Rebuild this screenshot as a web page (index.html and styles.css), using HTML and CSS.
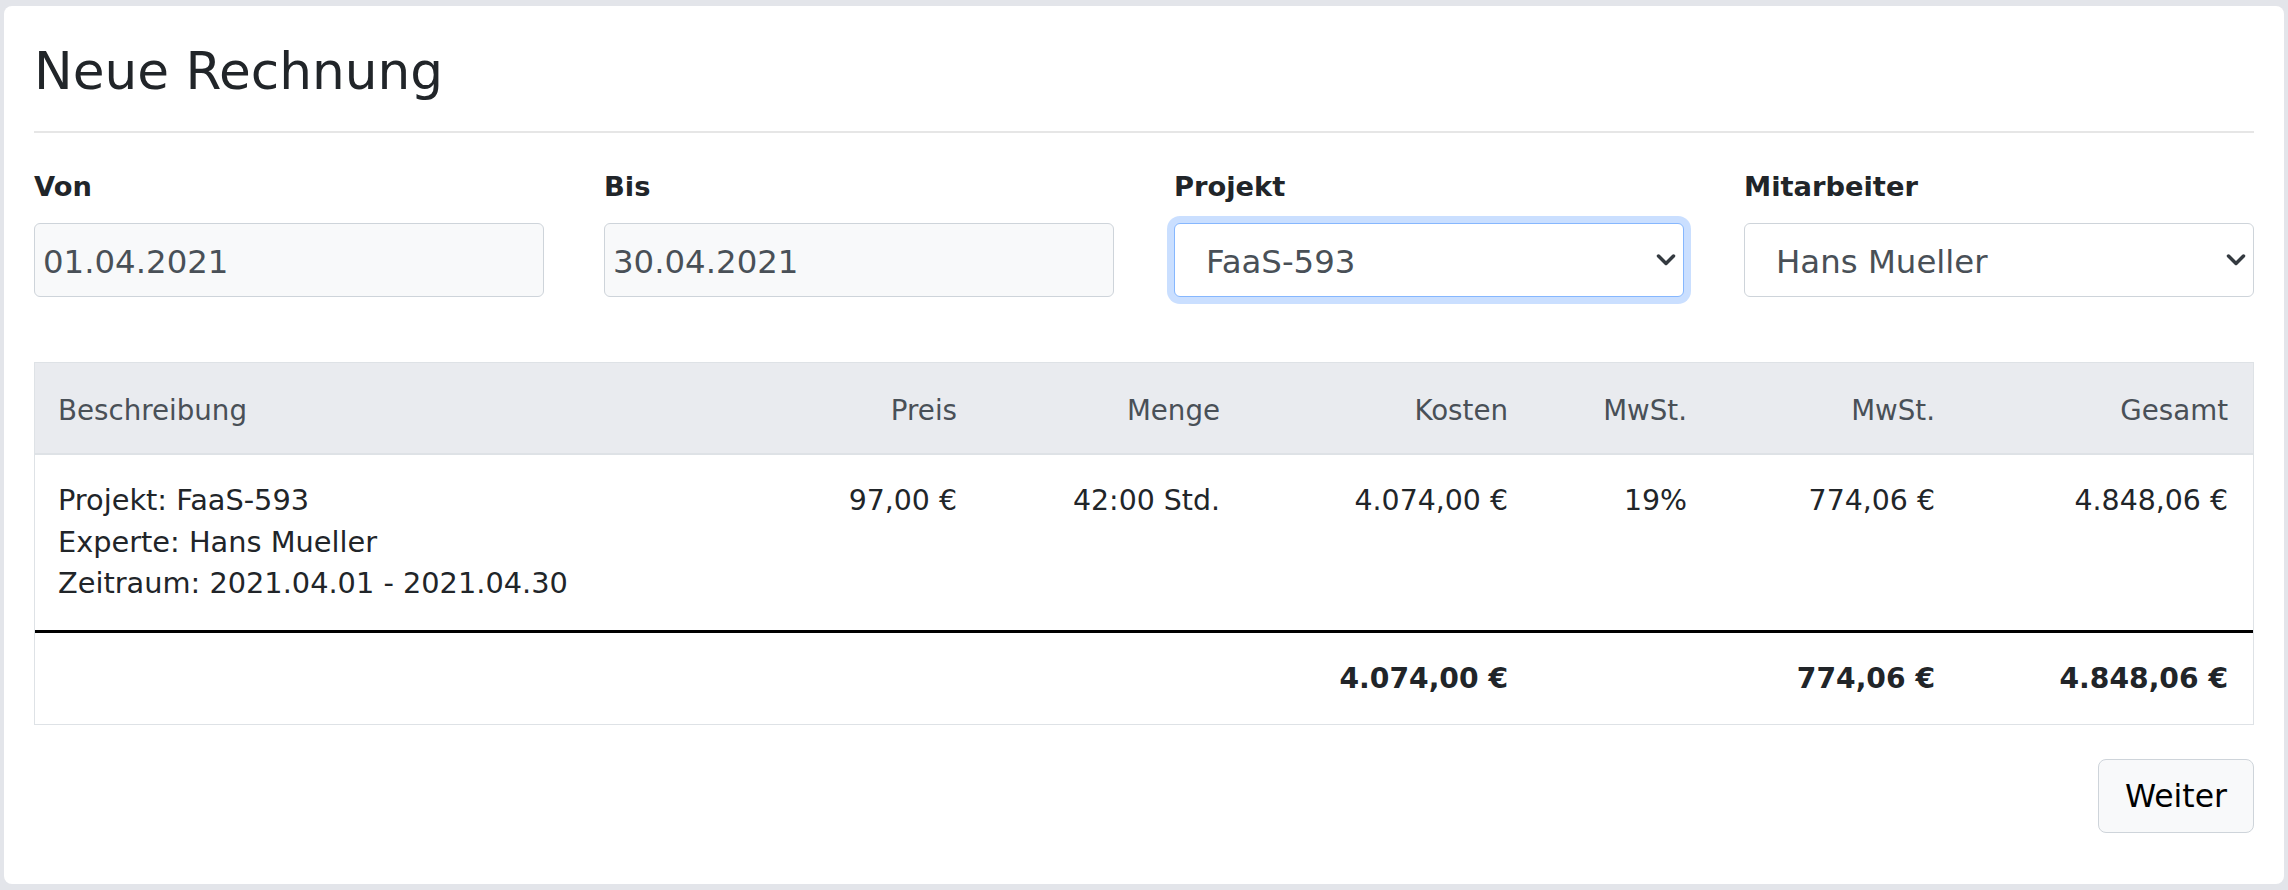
FILE: index.html
```html
<!DOCTYPE html>
<html lang="de">
<head>
    <meta charset="UTF-8">
    <meta name="viewport" content="width=device-width, initial-scale=1.0">
    <title>Neue Rechnung</title>
    <link rel="stylesheet" href="styles.css">
</head>
<body>
    <div class="card">
        <h1>Neue Rechnung</h1>
        <hr class="divider">

        <div class="filter-row">
            <div class="field">
                <label for="von">Von</label>
                <input type="text" id="von" class="control control-readonly" value="01.04.2021" readonly>
            </div>

            <div class="field">
                <label for="bis">Bis</label>
                <input type="text" id="bis" class="control control-readonly" value="30.04.2021" readonly>
            </div>

            <div class="field">
                <label for="projekt">Projekt</label>
                <div class="select-wrap">
                    <select id="projekt" class="control control-select is-focused">
                        <option>FaaS-593</option>
                    </select>
                    <svg class="chevron" viewBox="0 0 20 13" aria-hidden="true">
                        <path d="M2.5 2.5 L10 10 L17.5 2.5" />
                    </svg>
                </div>
            </div>

            <div class="field">
                <label for="mitarbeiter">Mitarbeiter</label>
                <div class="select-wrap">
                    <select id="mitarbeiter" class="control control-select">
                        <option>Hans Mueller</option>
                    </select>
                    <svg class="chevron" viewBox="0 0 20 13" aria-hidden="true">
                        <path d="M2.5 2.5 L10 10 L17.5 2.5" />
                    </svg>
                </div>
            </div>
        </div>

        <div class="table-wrap">
            <table class="invoice-table">
                <colgroup>
                    <col class="col-desc">
                    <col class="col-price">
                    <col class="col-qty">
                    <col class="col-cost">
                    <col class="col-rate">
                    <col class="col-tax">
                    <col class="col-total">
                </colgroup>
                <thead>
                    <tr>
                        <th class="text-left">Beschreibung</th>
                        <th>Preis</th>
                        <th>Menge</th>
                        <th>Kosten</th>
                        <th>MwSt.</th>
                        <th>MwSt.</th>
                        <th>Gesamt</th>
                    </tr>
                </thead>
                <tbody>
                    <tr>
                        <td class="text-left description">
                            Projekt: FaaS-593<br>
                            Experte: Hans Mueller<br>
                            Zeitraum: 2021.04.01 - 2021.04.30
                        </td>
                        <td>97,00 €</td>
                        <td>42:00 Std.</td>
                        <td>4.074,00 €</td>
                        <td>19%</td>
                        <td>774,06 €</td>
                        <td>4.848,06 €</td>
                    </tr>
                </tbody>
                <tfoot>
                    <tr>
                        <td></td>
                        <td></td>
                        <td></td>
                        <td>4.074,00 €</td>
                        <td></td>
                        <td>774,06 €</td>
                        <td>4.848,06 €</td>
                    </tr>
                </tfoot>
            </table>
        </div>

        <div class="actions">
            <button type="button" class="btn">Weiter</button>
        </div>
    </div>
</body>
</html>
```

FILE: styles.css
```css
* {
    margin: 0;
    padding: 0;
    box-sizing: border-box;
}

body {
    font-family: "DejaVu Sans", Verdana, sans-serif;
    color: #212529;
    background-color: #e3e5ea;
    padding: 6px 4px;
}

.card {
    background: #fff;
    border-radius: 8px;
    padding: 35px 30px 51px;
}

h1 {
    font-size: 51.7px;
    font-weight: normal;
    line-height: 61px;
    margin-bottom: 29px;
}

.divider {
    height: 2px;
    border: none;
    background: #e6e6e6;
    margin-bottom: 34px;
}

.filter-row {
    display: grid;
    grid-template-columns: repeat(4, 1fr);
    gap: 60px;
    margin-bottom: 65px;
}

label {
    display: block;
    font-size: 27.3px;
    font-weight: bold;
    line-height: 40px;
    margin-bottom: 16px;
}

.control {
    display: block;
    width: 100%;
    height: 74px;
    border: 1px solid #ced4da;
    border-radius: 6px;
    font-family: inherit;
    font-size: 32.4px;
    color: #495057;
    outline: none;
}

.control-readonly {
    background: #f8f9fa;
    padding: 3px 8px 0;
}

.select-wrap {
    position: relative;
}

.control-select {
    appearance: none;
    -webkit-appearance: none;
    background: #fff;
    font-size: 32.4px;
    padding: 3px 40px 0 31px;
}

.control-select.is-focused {
    border-color: #86b7fe;
    box-shadow: 0 0 0 7px rgba(13, 110, 253, 0.22);
}

.chevron {
    position: absolute;
    right: 8px;
    top: 50%;
    width: 20px;
    height: 13px;
    transform: translateY(-50%);
    pointer-events: none;
}

.chevron path {
    fill: none;
    stroke: #343a40;
    stroke-width: 3.5;
    stroke-linecap: round;
    stroke-linejoin: round;
}

.table-wrap {
    border: 1px solid #dee2e6;
}

.invoice-table {
    width: 100%;
    table-layout: fixed;
    border-collapse: separate;
    border-spacing: 0;
}

.col-desc { width: 765px; }
.col-price { width: 182px; }
.col-qty { width: 263px; }
.col-cost { width: 288px; }
.col-rate { width: 179px; }
.col-tax { width: 248px; }
.col-total { width: 293px; }

.invoice-table th,
.invoice-table td {
    text-align: right;
    vertical-align: top;
    white-space: nowrap;
}

.invoice-table .text-left {
    text-align: left;
}

.invoice-table th {
    background: #e9ebef;
    color: #495057;
    font-size: 27.7px;
    font-weight: normal;
    line-height: 41px;
    padding: 27px 25px 22px 23px;
    border-bottom: 2px solid #dee2e6;
}

.invoice-table td {
    font-size: 28.4px;
    line-height: 41.6px;
    padding: 25px 25px 25px 23px;
}

.invoice-table td.description {
    font-size: 28.8px;
}

.invoice-table tfoot td {
    font-size: 28.2px;
    font-weight: bold;
    border-top: 3px solid #000;
}

.actions {
    display: flex;
    justify-content: flex-end;
    margin-top: 34px;
}

.btn {
    height: 74px;
    padding: 0 26px;
    font-family: inherit;
    font-size: 31.5px;
    color: #000;
    background: #f8f9fa;
    border: 1px solid #ced4da;
    border-radius: 8px;
    cursor: pointer;
}
```
